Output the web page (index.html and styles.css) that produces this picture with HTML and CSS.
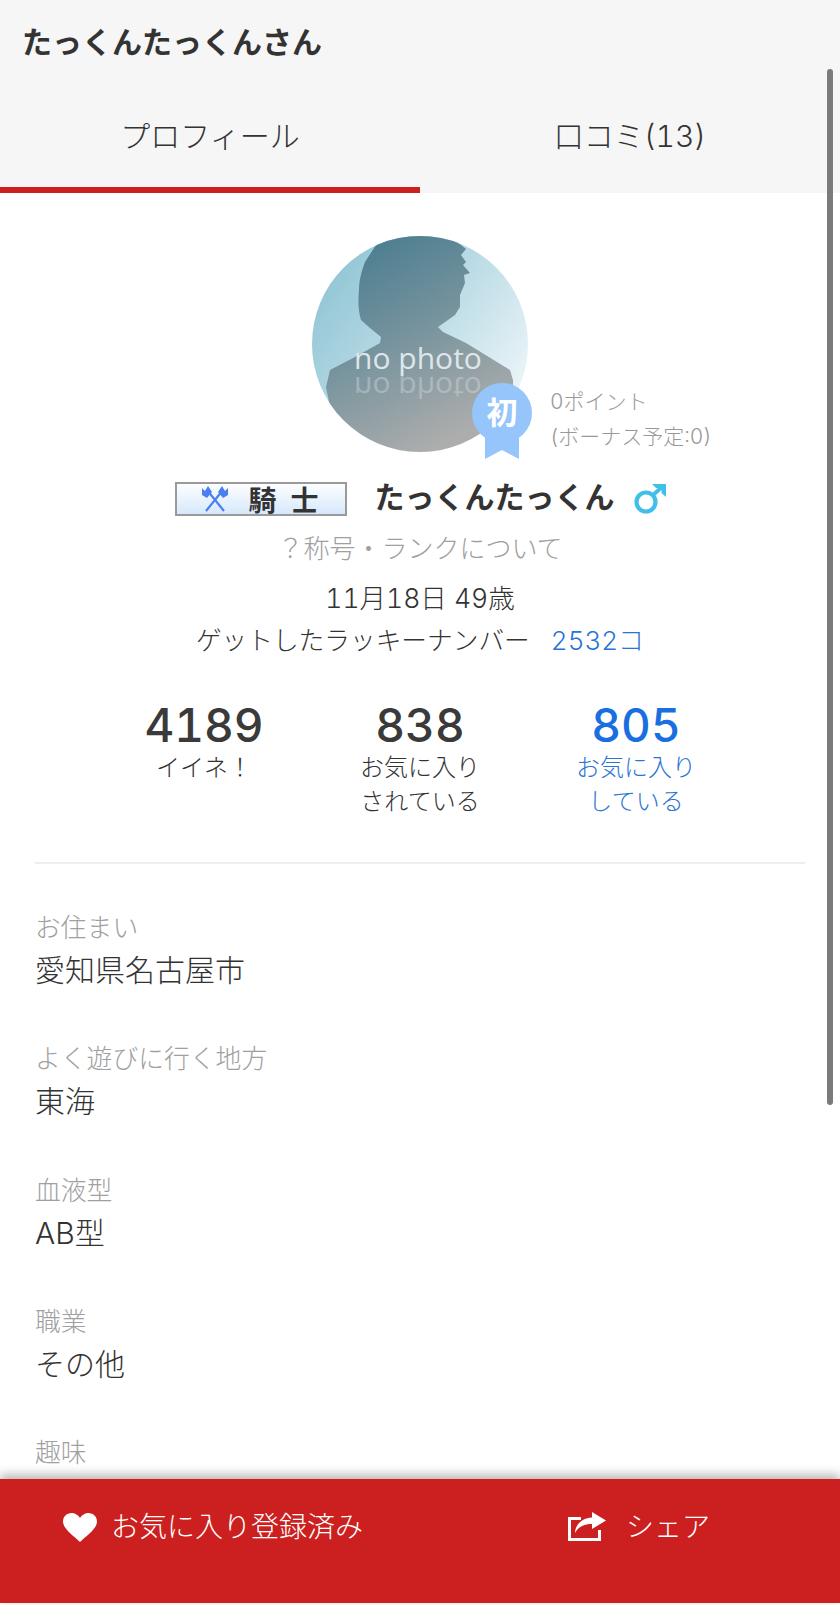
FILE: index.html
```html
<!DOCTYPE html>
<html lang="ja">
<head>
<meta charset="utf-8">
<title>たっくんたっくんさん</title>
<link rel="stylesheet" href="styles.css">
</head>
<body>
<div class="app">
  <header class="topbar">
    <h1 class="page-title">たっくんたっくんさん</h1>
    <nav class="tabs">
      <div class="tab tab-active">プロフィール</div>
      <div class="tab">口コミ(13)</div>
    </nav>
  </header>
  <main class="content">
    <section class="hero">
      <div class="avatar-row">
        <div class="avatar-wrap">
          <svg class="avatar" viewBox="0 0 216 216" aria-label="no photo">
            <defs>
              <linearGradient id="bg" x1="0" y1="0" x2="1" y2="0.75">
                <stop offset="0" stop-color="#86bfd0"/>
                <stop offset="0.55" stop-color="#bcdce6"/>
                <stop offset="1" stop-color="#f0f7fa"/>
              </linearGradient>
              <linearGradient id="fig" x1="0.1" y1="0" x2="0.55" y2="1">
                <stop offset="0" stop-color="#447a8e"/>
                <stop offset="0.5" stop-color="#76939d"/>
                <stop offset="1" stop-color="#adadad"/>
              </linearGradient>
              <clipPath id="disc"><circle cx="108" cy="108" r="108"/></clipPath>
            </defs>
            <g clip-path="url(#disc)">
              <rect width="216" height="216" fill="url(#bg)"/>
              <path fill="url(#fig)" d="M64 9 L66 -2 L142 -2 L144 5 L154 13 L149 19 L154 26 L151 29 L158 37 L152 39 L153 47 L148 59 L148 71 L143 79 L126 91 L131 96 L154 107 L198 134 L201 144 L201 216 L18 216 L18 171 L14 151 L18 134 L43 121 L68 107 L69 101 L58 92 L49 84 C46 74 46 64 47 54 C47 44 50 34 53 26 Z"/>
              <text class="nophoto" x="106" y="133" text-anchor="middle">no photo</text>
              <text class="nophoto nophoto-flip" x="106" y="-141" text-anchor="middle" transform="scale(1,-1)">no photo</text>
            </g>
          </svg>
          <svg class="ribbon" viewBox="0 0 60 76">
            <path fill="#96c5fb" d="M13 45 H47 V76 L30 67 L13 76 Z"/>
            <circle cx="30" cy="30" r="30" fill="#96c5fb"/>
            <text class="ribbon-text" x="30" y="41" text-anchor="middle">初</text>
          </svg>
          <div class="points">
            <div>0ポイント</div>
            <div>(ボーナス予定:0)</div>
          </div>
        </div>
      </div>
      <div class="name-row">
        <div class="rank">
          <svg class="rank-axes" viewBox="0 0 28 26">
            <path fill="none" stroke="#4a80ee" stroke-width="2.2" d="M6 4 L23 25 M22 4 L5 25"/>
            <path fill="#4a80ee" d="M1 2 L4 5 L7 0 L11 6 L6 12 L1 9 Z M27 2 L24 5 L21 0 L17 6 L22 12 L27 9 Z"/>
          </svg>
          <span class="rank-name">騎</span>
          <span class="rank-name">士</span>
        </div>
        <div class="name">たっくんたっくん</div>
        <svg class="gender" viewBox="0 0 32 30">
          <circle cx="12" cy="18" r="9.500" fill="none" stroke="#42bfe8" stroke-width="4.200"/>
          <path fill="none" stroke="#42bfe8" stroke-width="4" d="M19 11 L28 3"/>
          <path fill="#42bfe8" d="M18 0 H32 V13 L27.500 9 V4 H22 Z"/>
        </svg>
      </div>
      <div class="rank-help">？称号・ランクについて</div>
      <div class="birth">11月18日 49歳</div>
      <div class="lucky"><span>ゲットしたラッキーナンバー</span><span class="lucky-count">2532コ</span></div>
    </section>
    <section class="stats">
      <div class="stat"><div class="stat-num">4189</div><div class="stat-label">イイネ！</div></div>
      <div class="stat"><div class="stat-num">838</div><div class="stat-label">お気に入り<br>されている</div></div>
      <div class="stat stat-link"><div class="stat-num">805</div><div class="stat-label">お気に入り<br>している</div></div>
    </section>
    <section class="fields">
      <div class="field"><div class="field-label">お住まい</div><div class="field-value">愛知県名古屋市</div></div>
      <div class="field"><div class="field-label">よく遊びに行く地方</div><div class="field-value">東海</div></div>
      <div class="field"><div class="field-label">血液型</div><div class="field-value">AB型</div></div>
      <div class="field"><div class="field-label">職業</div><div class="field-value">その他</div></div>
      <div class="field"><div class="field-label">趣味</div></div>
    </section>
  </main>
  <footer class="actions">
    <div class="action action-fav">
      <svg class="heart" viewBox="0 0 34 29"><path fill="#fff" d="M17 29 C11 23 0 16 0 8.500 C0 3.500 4 0 8.500 0 C12 0 15.500 2 17 5 C18.500 2 22 0 25.500 0 C30 0 34 3.500 34 8.500 C34 16 23 23 17 29 Z"/></svg>
      <span>お気に入り登録済み</span>
    </div>
    <div class="action action-share">
      <svg class="share" viewBox="0 0 38 30">
        <path fill="none" stroke="#fff" stroke-width="3" d="M13 6.500 H1.500 V27.500 H31.500 V18"/>
        <path fill="#fff" d="M24 0 L38 8.500 L24 17 V12 C16 12 10 15 7 21 C7 13 14 6 24 5.500 Z"/>
      </svg>
      <span>シェア</span>
    </div>
  </footer>
  <div class="scrollbar"></div>
</div>
</body>
</html>
```
FILE: styles.css
```css
* { box-sizing: border-box; }
html, body { margin: 0; height: 100%; }
body {
  font-family: Inter, "Noto Sans CJK JP", sans-serif;
  font-weight: 300;
  font-feature-settings: "tnum";
  color: #333;
  background: #fff;
}
.app {
  position: relative;
  width: 840px;
  height: 1605px;
  display: flex;
  flex-direction: column;
  overflow: hidden;
}
.topbar { background: #f6f6f6; flex: none; }
.page-title {
  margin: 0;
  padding: 22px 22px 0;
  height: 86px;
  font-size: 30px;
  line-height: 40px;
  font-weight: 700;
  color: #333;
}
.tabs { display: flex; height: 107px; }
.tab {
  flex: 1;
  text-align: center;
  font-size: 30px;
  line-height: 100px;
  color: #333;
}
.tab-active { border-bottom: 6px solid #cc2020; }
.content { flex: 1; min-height: 0; overflow: hidden; padding: 43px 35px 0; }
.hero { display: flex; flex-direction: column; align-items: center; }
.avatar-row { display: flex; justify-content: center; width: 100%; height: 216px; }
.avatar-wrap { position: relative; width: 216px; height: 216px; }
.avatar { display: block; width: 216px; height: 216px; }
.nophoto { font-family: "Open Sans", sans-serif; font-size: 30px; font-weight: 400; fill: #dfe6ea; }
.nophoto-flip { opacity: .35; }
.ribbon { position: absolute; left: 160px; top: 147px; width: 60px; height: 76px; }
.ribbon-text { font-size: 31px; font-weight: 700; fill: #fff; }
.points {
  position: absolute;
  left: 238px;
  top: 148px;
  width: 200px;
  font-size: 21px;
  line-height: 35px;
  color: #999;
}
.name-row {
  margin-top: 25px;
  height: 40px;
  display: flex;
  align-items: center;
}
.rank {
  width: 172px;
  height: 34px;
  margin-top: 4px;
  border: 2px solid #9a9a9a;
  background: linear-gradient(#fdfeff, #d6e8fb);
  display: flex;
  align-items: center;
  padding-left: 24px;
}
.rank-axes { width: 28px; height: 26px; margin-right: 20px; }
.rank-name { font-family: "Noto Sans CJK JP", sans-serif; font-size: 28px; font-weight: 700; line-height: 28px; color: #333; margin-right: 14px; }
.name { margin-left: 28px; font-size: 30px; font-weight: 700; line-height: 40px; color: #333; }
.gender { margin-left: 19px; width: 32px; height: 30px; margin-top: 3px; }
.rank-help { margin-top: 14px; font-size: 26px; line-height: 36px; color: #a0a0a0; }
.birth { margin-top: 12px; font-size: 26.5px; line-height: 38px; color: #333; }
.lucky { margin-top: 4px; font-size: 25.7px; line-height: 40px; color: #333; display: flex; }
.lucky-count { margin-left: 21px; color: #2a74d4; font-size: 26px; }
.stats {
  margin-top: 38px;
  padding: 0 61px 44px;
  border-bottom: 2px solid #eee;
  display: grid;
  grid-template-columns: repeat(3, 216px);
  text-align: center;
}
.stat-num {
  font-weight: 550;
  font-size: 46px;
  line-height: 52px;
  color: #3a3a3a;
}
.stat-label { font-size: 24px; line-height: 33.5px; color: #333; }
.stat-link .stat-num { color: #1a6fe0; }
.stat-link .stat-label { color: #2a74d4; }
.fields { display: flex; flex-direction: column; padding-top: 46px; }
.field { height: 131.3px; }
.field-label { font-size: 25.8px; line-height: 36px; color: #a0a0a0; }
.field-value { font-size: 30px; line-height: 49px; color: #333; }
.actions {
  flex: none;
  height: 124px;
  margin-bottom: 2px;
  background: #cc2020;
  color: #fff;
  box-shadow: 0 -4px 10px rgba(0,0,0,.3);
  display: flex;
  align-items: flex-start;
  position: relative;
  font-size: 28px;
  padding-top: 27px;
}
.action { display: flex; align-items: center; height: 38px; }
.action-fav { margin-left: 63px; width: 505px; }
.heart { width: 34px; height: 29px; margin-right: 14px; margin-top: 4px; }
.share { width: 38px; height: 30px; margin-right: 20px; margin-top: 4px; }
.scrollbar {
  position: absolute;
  left: 827px;
  top: 69px;
  width: 6px;
  height: 1036px;
  border-radius: 3px;
  background: #7b7b7b;
}
```
